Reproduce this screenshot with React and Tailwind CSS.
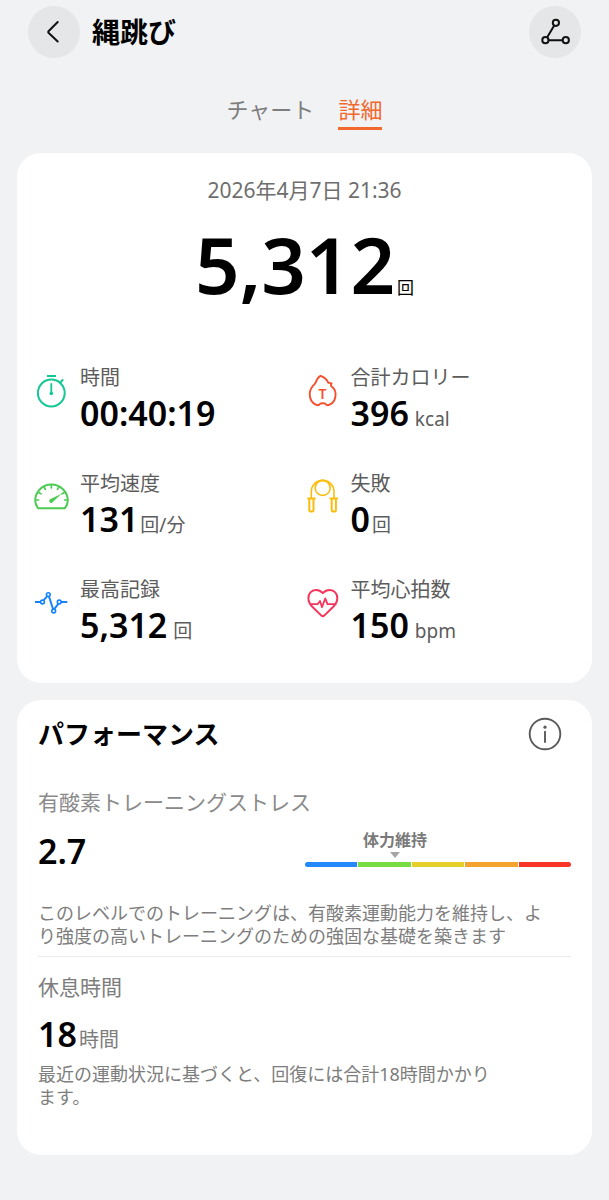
import React, { useState } from 'react';

const StopwatchIcon = () => (
  <svg viewBox="0 0 36 36" className="w-9 h-9" fill="none" stroke="#14c896" strokeWidth="2" strokeLinecap="round" aria-hidden="true">
    <circle cx="17.3" cy="20" r="13.4" />
    <path d="M13 3h9" strokeLinecap="butt" />
    <path d="M26.4 9.4l2.2-2.4" />
    <path d="M17.3 11v8.5" strokeWidth="1.8" />
    <circle cx="17.3" cy="20.4" r="1.8" fill="#14c896" stroke="none" />
  </svg>
);

const GaugeIcon = () => (
  <svg viewBox="0 0 36 36" className="w-9 h-9" fill="none" stroke="#4bcb50" strokeWidth="2" strokeLinecap="round" aria-hidden="true">
    <path d="M4 29.2C2.4 27 1.2 24.5 1.2 21.6C1.2 12.6 8.5 5.6 17.4 5.6S33.8 12.6 33.8 21.6C33.8 24.5 32.6 27 31 29.2Z" strokeLinejoin="round" />
    <path d="M17.4 6v3M10 8l1.3 2.4M24.8 8l-1.3 2.4M4.5 13.5l2.4 1.3M30.4 13.5l-2.4 1.3M2 21h2.4M30.6 21H33" strokeWidth="1.7" />
    <path d="M27.6 14.7L16.6 20a2 2 0 1 0 2.4 2.8Z" fill="#4bcb50" stroke="none" />
  </svg>
);

const PulseIcon = () => (
  <svg viewBox="0 0 36 36" className="w-9 h-9" fill="none" stroke="#1683fb" strokeWidth="2" strokeLinejoin="round" aria-hidden="true">
    <path d="M1 17h5.7M9.7 15.2l3.6-4M15 11.5l4 12.5M20.3 24l4-5.2M27 17h6.3" />
    <circle cx="8.5" cy="17" r="1.9" strokeWidth="1.6" />
    <circle cx="14.3" cy="9.6" r="1.9" strokeWidth="1.6" />
    <circle cx="19.7" cy="26" r="1.9" strokeWidth="1.6" />
    <circle cx="25.2" cy="17" r="1.9" strokeWidth="1.6" />
  </svg>
);

const FlameIcon = () => (
  <svg viewBox="0 0 36 36" className="w-9 h-9" fill="none" stroke="#f4502f" strokeWidth="1.9" strokeLinejoin="round" strokeLinecap="round" aria-hidden="true">
    <path d="M15.6 2.8C18.8 4 22 6.2 23.4 9.9C24.6 9.8 25.8 9.8 26.6 10.5C25.8 11.3 25.6 12 26 13C29 15 30.6 17.6 30.6 21C30.6 26.2 28 30.3 24.6 31.7C22.8 32.5 21.3 32.5 20.8 31C20 30 15.5 30 14.8 31C14 32.5 12.5 32.5 10.8 31.7C7 30 4.7 25.8 4.7 20.6C4.7 16 7.5 13 10.2 10.3C11.6 8 12 4.2 15.6 2.8Z" />
    <text x="17.6" y="25.5" textAnchor="middle" fontSize="14" fontWeight="600" fill="#f4502f" stroke="none">T</text>
  </svg>
);

const RopeIcon = () => (
  <svg viewBox="0 0 36 36" className="w-9 h-9" fill="none" stroke="#fbbd0c" strokeWidth="1.6" strokeLinecap="round" aria-hidden="true">
    <circle cx="17.7" cy="8.9" r="7.5" />
    <path d="M6.3 19V12.5C6.3 6.5 11 1.4 17.7 1.4S29 6.5 29 12.5V19" />
    <path d="M3.2 19.5h6.6M25.5 19.5h6.6" strokeWidth="2.2" />
    <path d="M4.3 20v11.2q0 1.3 1.3 1.3h1.6q1.3 0 1.3-1.3V20M26.7 20v11.2q0 1.3 1.3 1.3h1.6q1.3 0 1.3-1.3V20" strokeWidth="2" />
  </svg>
);

const HeartIcon = () => (
  <svg viewBox="0 0 36 36" className="w-9 h-9" fill="none" stroke="#f5365c" strokeWidth="2" strokeLinejoin="round" strokeLinecap="round" aria-hidden="true">
    <path d="M17.8 8C15.8 5.8 13.5 4.9 11 4.9C6.3 4.9 3.4 8.6 3.4 13C3.4 16.5 4.8 19.3 7.3 21.7L16.4 30.6Q17.8 31.8 19.2 30.6L28.3 21.7C30.8 19.3 32.3 16.5 32.3 13C32.3 8.6 29.3 4.9 24.7 4.9C22 4.9 19.8 5.8 17.8 8Z" />
    <path d="M5.5 19.1h7.3l2.2-3.2 2 6.3 3.3-8.8 2.2 5.7h8" strokeWidth="1.8" />
  </svg>
);

const stats = [
  { label: '時間', value: '00:40:19', icon: StopwatchIcon },
  { label: '合計カロリー', value: '396', unit: 'kcal', spaced: true, icon: FlameIcon },
  { label: '平均速度', value: '131', unit: '回/分', icon: GaugeIcon },
  { label: '失敗', value: '0', unit: '回', icon: RopeIcon },
  { label: '最高記録', value: '5,312', unit: '回', spaced: true, icon: PulseIcon },
  { label: '平均心拍数', value: '150', unit: 'bpm', spaced: true, icon: HeartIcon },
];

const levels = ['bg-[#2489fb]', 'bg-[#78dc43]', 'bg-[#e5d02b]', 'bg-[#f4a42e]', 'bg-[#f93527]'];

const Stat = ({ label, value, unit, spaced, icon: Icon }) => (
  <div className="flex items-start gap-2.5">
    <div className="mt-2.5 shrink-0">
      <Icon />
    </div>
    <div>
      <dt className="text-[20px] leading-[30px] text-[#5c5c5c]">{label}</dt>
      <dd className="flex items-baseline text-[34px] leading-[40px] font-semibold">
        {value}
        {unit && (
          <span className={`text-[19px] leading-none font-normal text-[#5c5c5c] ${spaced ? 'ml-1.5' : 'ml-0.5'}`}>
            {unit}
          </span>
        )}
      </dd>
    </div>
  </div>
);

const StressScale = ({ position, label }) => (
  <div className="w-1/2">
    <div className="relative h-7">
      <div
        className="absolute top-0 flex -translate-x-1/2 flex-col items-center whitespace-nowrap"
        style={{ left: `${position}%` }}
      >
        <span className="text-[16px] leading-5 font-bold text-[#7a7a7a]">{label}</span>
        <svg viewBox="0 0 10 6" className="mt-0.5 h-1.5 w-2.5" fill="#a6a6a6" aria-hidden="true">
          <path d="M0 0h10L5 6Z" />
        </svg>
      </div>
    </div>
    <div className="mt-1 flex h-[5px] gap-px overflow-hidden rounded-full">
      {levels.map((color) => (
        <div key={color} className={`flex-1 ${color}`} />
      ))}
    </div>
  </div>
);

const App = () => {
  const [tab, setTab] = useState('詳細');

  return (
    <div className="min-h-screen bg-[#f1f2f4] pb-11 text-black font-['Noto_Sans','Noto_Sans_CJK_JP',sans-serif]">
      <header className="flex items-center justify-between px-7 pt-1.5">
        <div className="flex items-center gap-3">
          <button type="button" aria-label="戻る" className="h-[52px] w-[52px] rounded-full bg-[#e5e6e7]">
            <svg viewBox="0 0 52 52" fill="none" stroke="#111" strokeWidth="2" strokeLinecap="round" strokeLinejoin="round">
              <path d="M29.7 16L20.5 25.2Q19.9 26 20.5 26.8L29.7 35.5" />
            </svg>
          </button>
          <h1 className="text-[28px] leading-10 font-bold">縄跳び</h1>
        </div>
        <button type="button" aria-label="軌跡" className="h-[52px] w-[52px] rounded-full bg-[#e5e6e7]">
          <svg viewBox="0 0 52 52" fill="none" stroke="#111" strokeWidth="2">
            <path d="M25.2 19.6L18.2 31.2M19.7 34.2h13.8" />
            <circle cx="26.9" cy="16.8" r="3.1" />
            <circle cx="16.4" cy="34.2" r="3.1" />
            <circle cx="36.8" cy="34.2" r="3.1" />
          </svg>
        </button>
      </header>

      <div role="tablist" className="mt-[35px] flex justify-center gap-6">
        {['チャート', '詳細'].map((name) => (
          <button
            key={name}
            type="button"
            role="tab"
            aria-selected={tab === name}
            onClick={() => setTab(name)}
            className={`border-b-3 pb-0.5 text-[22px] leading-8 ${
              tab === name ? 'border-[#f2682c] text-[#f2682c]' : 'border-transparent text-[#7d7d7d]'
            }`}
          >
            {name}
          </button>
        ))}
      </div>

      <main className="mt-[23px] flex flex-col gap-[17px] px-[17px]">
        <section className="rounded-3xl bg-white px-[17px] pt-[23px] pb-[38px]">
          <p className="text-center text-[21px] leading-7 text-[#6e6e6e]">2026年4月7日 21:36</p>
          <p className="mt-3 flex items-baseline justify-center text-[78px] leading-[96px] font-semibold">
            5,312
            <span className="ml-0.5 text-[17px] leading-none font-normal">回</span>
          </p>
          <dl className="mt-[51px] grid grid-cols-2 gap-y-9">
            {stats.map((stat) => (
              <Stat key={stat.label} {...stat} />
            ))}
          </dl>
        </section>

        <section className="rounded-3xl bg-white px-[21px] pt-4 pb-[46px]">
          <div className="flex items-center justify-between pr-2">
            <h2 className="text-[26px] leading-9 font-bold">パフォーマンス</h2>
            <button type="button" aria-label="情報" className="h-9 w-9">
              <svg viewBox="0 0 36 36" fill="none" stroke="#5a5a5a" strokeWidth="1.9" strokeLinecap="round">
                <circle cx="18" cy="18" r="15.3" />
                <path d="M18 15.6v10.4" />
                <circle cx="18" cy="11.2" r="1.6" fill="#5a5a5a" stroke="none" />
              </svg>
            </button>
          </div>

          <h3 className="mt-9 text-[21px] leading-7 text-[#8a8a8a]">有酸素トレーニングストレス</h3>
          <div className="mt-3.5 flex items-start justify-between">
            <p className="text-[34px] leading-[42px] font-semibold">2.7</p>
            <StressScale position={34} label="体力維持" />
          </div>
          <p className="mt-[30px] pr-4 text-[18px] leading-[23px] text-[#7d7d7d]">
            このレベルでのトレーニングは、有酸素運動能力を維持し、より強度の高いトレーニングのための強固な基礎を築きます
          </p>

          <hr className="mt-2 border-[#ececec]" />

          <h3 className="mt-4 text-[21px] leading-7 text-[#7d7d7d]">休息時間</h3>
          <p className="mt-3 flex items-baseline text-[34px] leading-[42px] font-semibold">
            18
            <span className="ml-0.5 text-[20px] leading-none font-normal text-[#7d7d7d]">時間</span>
          </p>
          <p className="mt-2 pr-18 text-[18px] leading-[23px] text-[#7d7d7d]">
            最近の運動状況に基づくと、回復には合計18時間かかります。
          </p>
        </section>
      </main>
    </div>
  );
};

export default App;
